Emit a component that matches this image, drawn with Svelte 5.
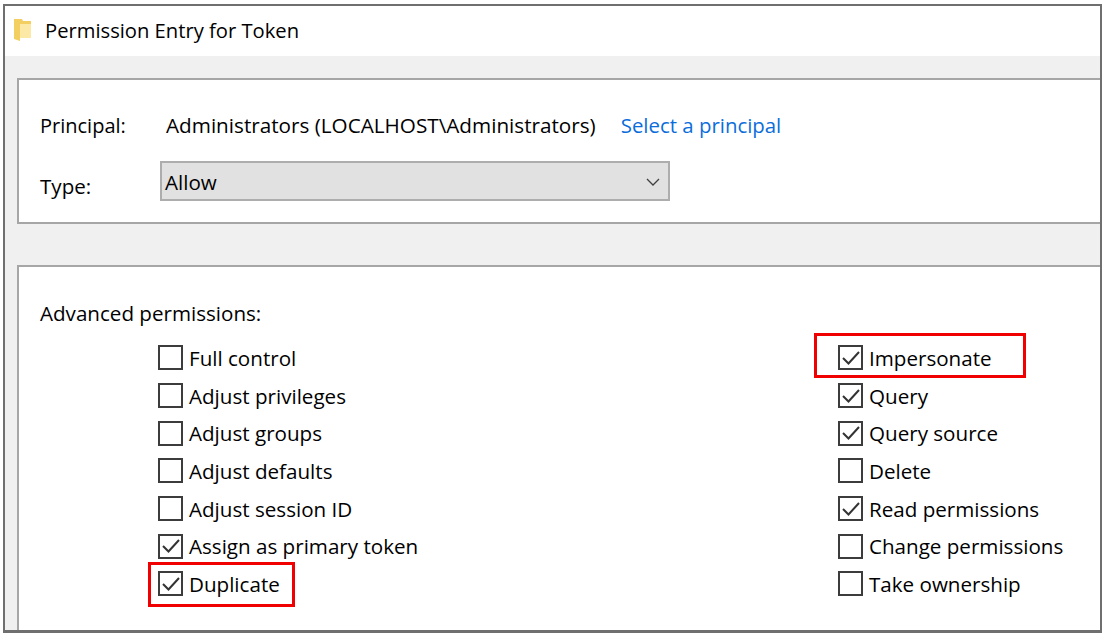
<script>
  const left = [
    { label: 'Full control', checked: false },
    { label: 'Adjust privileges', checked: false },
    { label: 'Adjust groups', checked: false },
    { label: 'Adjust defaults', checked: false },
    { label: 'Adjust session ID', checked: false },
    { label: 'Assign as primary token', checked: true },
    { label: 'Duplicate', checked: true, mark: 'mark-dup' }
  ];
  const right = [
    { label: 'Impersonate', checked: true, mark: 'mark-imp' },
    { label: 'Query', checked: true },
    { label: 'Query source', checked: true },
    { label: 'Delete', checked: false },
    { label: 'Read permissions', checked: true },
    { label: 'Change permissions', checked: false },
    { label: 'Take ownership', checked: false }
  ];
  const columns = [left, right];
</script>

<div class="page">
  <div class="dialog">
    <header class="title">
      <svg class="folder" width="18" height="24" viewBox="0 0 18 24">
        <path fill="#f3cf62" d="M0 1h8l1 2h8v3H6v17l-6-2z" />
        <path fill="#fce9a6" d="M6 6h11v14H6z" />
      </svg>
      <span>Permission Entry for Token</span>
    </header>
    <div class="body">
      <section class="panel top">
        <div class="row principal">
          <span class="key">Principal:</span>
          <span class="value">Administrators (LOCALHOST\Administrators)</span>
          <span class="link">Select a principal</span>
        </div>
        <div class="row type">
          <span class="key">Type:</span>
          <div class="select">
            <span>Allow</span>
            <svg width="14" height="8" viewBox="0 0 14 8">
              <path d="M1 1l6 6 6-6" fill="none" stroke="#404040" stroke-width="1.3" />
            </svg>
          </div>
        </div>
      </section>
      <section class="panel perms">
        <div class="heading">Advanced permissions:</div>
        <div class="columns">
          {#each columns as col}
            <div class="col">
              {#each col as item}
                <div class="item {item.mark ?? ''}">
                  <span class="box">
                    {#if item.checked}
                      <svg width="18" height="16" viewBox="0 0 18 16">
                        <path d="M1 8l5.5 5.5L17 2" fill="none" stroke="#333" stroke-width="2" />
                      </svg>
                    {/if}
                  </span>
                  <span>{item.label}</span>
                </div>
              {/each}
            </div>
          {/each}
        </div>
      </section>
    </div>
  </div>
</div>

<style>
  :global(body) {
    margin: 0;
    background: #fff;
  }

  .page {
    width: 1104px;
    height: 634px;
    box-sizing: border-box;
    padding: 4px 2px 1px 3px;
    font-family: "Open Sans", "Noto Sans", sans-serif;
    font-size: 20.6px;
    color: #000;
    overflow: hidden;
  }

  .dialog {
    height: 100%;
    box-sizing: border-box;
    border: 2px solid #6f6f6f;
    border-bottom-width: 3px;
    display: flex;
    flex-direction: column;
    background: #f0f0f0;
  }

  .title {
    height: 50px;
    flex: none;
    display: flex;
    align-items: center;
    gap: 13px;
    padding: 0 0 2px 9px;
    box-sizing: border-box;
    background: #fff;
    font-size: 20.2px;
  }

  .folder {
    flex: none;
  }

  .body {
    flex: 1;
    padding: 22px 0 0 12px;
    display: flex;
    flex-direction: column;
    gap: 41px;
  }

  .panel {
    background: #fff;
    border: 2px solid #a6a6a6;
    border-right: none;
    box-sizing: border-box;
  }

  .top {
    height: 146px;
    padding: 31px 0 0 21px;
  }

  .row {
    display: flex;
    align-items: center;
  }

  .key {
    width: 126px;
    flex: none;
  }

  .principal .key {
    font-size: 20px;
  }

  .value {
    margin-right: 25px;
    font-size: 20.7px;
  }

  .link {
    color: #0a6ddb;
    font-size: 20.4px;
  }

  .type {
    margin-top: 22px;
  }

  .type .key {
    width: 120px;
    padding-top: 9px;
  }

  .select {
    width: 510px;
    height: 40px;
    box-sizing: border-box;
    border: 2px solid #adadad;
    background: #e1e1e1;
    display: flex;
    align-items: center;
    justify-content: space-between;
    padding: 2px 8px 0 3px;
  }

  .perms {
    flex: 1;
    border-bottom: none;
    padding: 32px 0 0 21px;
  }

  .heading {
    height: 33px;
  }

  .columns {
    display: grid;
    grid-template-columns: 680px 1fr;
    margin-top: 7px;
    padding-left: 118px;
  }

  .col {
    display: flex;
    flex-direction: column;
  }

  .item {
    position: relative;
    height: 37.7px;
    display: flex;
    align-items: center;
    gap: 6px;
  }

  .box {
    width: 25px;
    height: 25px;
    box-sizing: border-box;
    border: 2px solid #3c3c3c;
    display: flex;
    align-items: center;
    justify-content: center;
    background: #fff;
  }

  .mark-dup::after,
  .mark-imp::after {
    content: "";
    position: absolute;
    height: 45px;
    box-sizing: border-box;
    border: 3px solid #f00000;
  }

  .mark-dup::after {
    top: -3px;
    left: -10px;
    width: 147px;
  }

  .mark-imp::after {
    top: -6px;
    left: -24px;
    width: 212px;
  }
</style>
